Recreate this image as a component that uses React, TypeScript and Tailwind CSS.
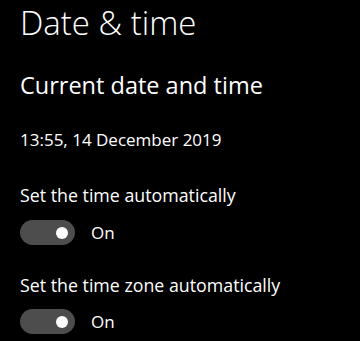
import React from "react";

function Toggle() {
  return (
    <div className="flex items-center gap-[16px]">
      <div className="w-[55px] h-[25px] rounded-full bg-[#4d4d4d] flex items-center justify-end pr-[7px]">
        <div className="w-[12px] h-[12px] rounded-full bg-white" />
      </div>
      <span className="text-[17px] leading-[25px] text-white">On</span>
    </div>
  );
}

export default function App() {
  return (
    <div
      className="w-[360px] h-[341px] bg-black text-white pl-[20px] overflow-hidden"
      style={{ fontFamily: '"Open Sans", "Noto Sans", sans-serif' }}
    >
      <div className="text-[33px] leading-[45px] font-light">Date &amp; time</div>
      <div className="text-[23.5px] leading-[28px] mt-[26px]">Current date and time</div>
      <div className="text-[17px] leading-[22px] mt-[30px]">13:55, 14 December 2019</div>
      <div className="text-[17.8px] leading-[24px] mt-[32px]">Set the time automatically</div>
      <div className="mt-[13px]">
        <Toggle />
      </div>
      <div className="text-[17.8px] leading-[24px] mt-[28px]">Set the time zone automatically</div>
      <div className="mt-[12px]">
        <Toggle />
      </div>
    </div>
  );
}
